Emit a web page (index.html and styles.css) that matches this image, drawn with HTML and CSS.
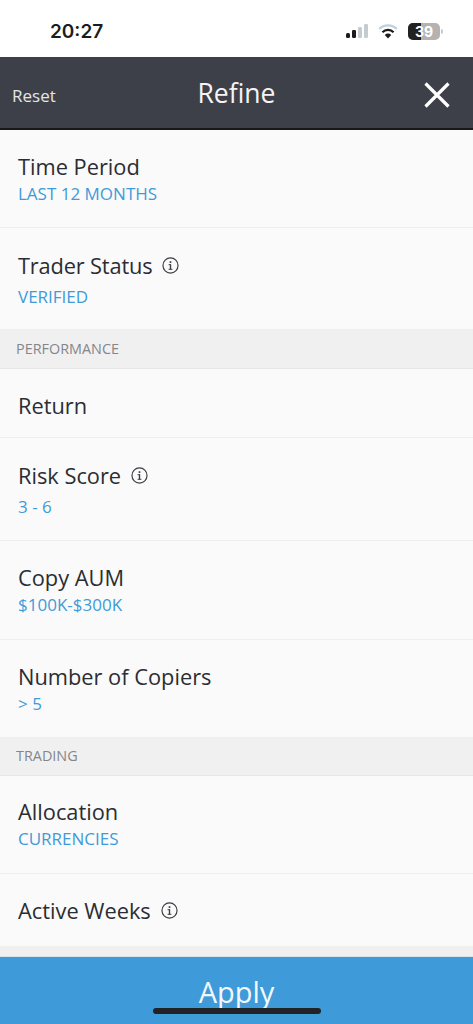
FILE: index.html
```html
<!DOCTYPE html>
<html lang="en">
<head>
<meta charset="utf-8">
<title>Refine</title>
<link rel="stylesheet" href="styles.css">
</head>
<body>
<div class="screen">
  <div class="status">
    <span class="clock">20:27</span>
    <div class="status-icons">
      <svg class="signal" width="24" height="16" viewBox="0 0 24 16"><rect x="0" y="10" width="4" height="5" rx="1.5" fill="#1c1c1e"/><rect x="6" y="7" width="4" height="8" rx="1.2" fill="#1c1c1e"/><rect x="12" y="4" width="4" height="11" rx="1.2" fill="#c4ccd2"/><rect x="18" y="1" width="4" height="14" rx="1.2" fill="#c4ccd2"/></svg>
      <svg class="wifi" width="20" height="15" viewBox="0 0 20 15"><path d="M1.2 5 A12.4 12.4 0 0 1 18.8 5" fill="none" stroke="#bfd0dc" stroke-width="2.3"/><path d="M4.4 8.2 A8 8 0 0 1 15.6 8.2" fill="none" stroke="#1c1c1e" stroke-width="2.3"/><path d="M10 14.5 L6.8 10.9 A4.6 4.6 0 0 1 13.2 10.9 Z" fill="#1c1c1e"/></svg>
      <div class="battery"><span class="battery-fill"></span><span class="battery-num">39</span><span class="battery-cap"></span></div>
    </div>
  </div>
  <header class="topbar">
    <span class="reset">Reset</span>
    <span class="title">Refine</span>
    <svg class="close" width="26" height="26" viewBox="0 0 26 26"><path d="M1.5 1.5 L24.5 24.5 M24.5 1.5 L1.5 24.5" stroke="#fff" stroke-width="3.2" fill="none"/></svg>
  </header>
  <main class="list">
    <div class="row h98"><div class="label">Time Period</div><div class="value">LAST 12 MONTHS</div></div>
    <div class="row h102 trader"><div class="label tight">Trader Status <svg class="info" viewBox="0 0 16 16"><use href="#i"/></svg></div><div class="value">VERIFIED</div></div>
    <div class="section">PERFORMANCE</div>
    <div class="row h69 solo"><div class="label">Return</div></div>
    <div class="row h103 spaced"><div class="label">Risk Score <svg class="info" viewBox="0 0 16 16"><use href="#i"/></svg></div><div class="value">3 - 6</div></div>
    <div class="row h99 up"><div class="label">Copy AUM</div><div class="value">$100K-$300K</div></div>
    <div class="row h97 last"><div class="label">Number of Copiers</div><div class="value">&gt; 5</div></div>
    <div class="section">TRADING</div>
    <div class="row h98 up"><div class="label">Allocation</div><div class="value">CURRENCIES</div></div>
    <div class="row h72 last"><div class="label">Active Weeks <svg class="info" viewBox="0 0 16 16"><use href="#i"/></svg></div></div>
  </main>
  <div class="gap"></div>
  <footer class="apply"><span>Apply</span><div class="home"></div></footer>
</div>
<svg class="defs" width="0" height="0"><defs><g id="i"><circle cx="8" cy="8" r="7.1" fill="none" stroke="#3a3c42" stroke-width="1.1"/><rect x="7.35" y="6.8" width="1.3" height="5" fill="#3a3c42"/><rect x="6.2" y="6.8" width="2" height="0.9" fill="#3a3c42"/><rect x="6.2" y="11.1" width="3.6" height="0.9" fill="#3a3c42"/><rect x="7.2" y="4" width="1.6" height="1.6" fill="#3a3c42"/></g></defs></svg>
</body>
</html>
```
FILE: styles.css
```css
* { box-sizing: border-box; }
html, body { margin: 0; padding: 0; }
body { font-family: "Open Sans", sans-serif; background: #fafafa; }
.screen { width: 473px; height: 1024px; overflow: hidden; display: flex; flex-direction: column; }
.defs { display: block; height: 0; }
.status { height: 57px; flex: none; background: #fff; display: flex; align-items: center; justify-content: space-between; padding: 6px 33px 1px 50px; }
.clock { font-family: Inter, sans-serif; font-weight: 600; font-size: 19px; color: #1c1c1e; }
.status-icons { display: flex; align-items: center; gap: 9px; }
.signal { margin-right: -1px; }
.wifi { margin-right: 1px; }
.battery { position: relative; width: 32px; height: 17px; border-radius: 5px; background: #b3b3b3; }
.battery-fill { position: absolute; left: 0; top: 0; width: 13px; height: 17px; background: #222224; border-radius: 5px 0 0 5px; }
.battery-num { position: absolute; left: 0; right: 0; top: 0; text-align: center; font-family: Inter, sans-serif; font-weight: 700; font-size: 14px; line-height: 17px; color: #fff; }
.battery-cap { position: absolute; right: -3px; top: 6px; width: 2px; height: 5px; background: #c8c8c8; border-radius: 0 2px 2px 0; }
.topbar { height: 73px; flex: none; background: #3e4049; border-bottom: 2px solid #17181c; display: flex; align-items: center; justify-content: space-between; padding: 4px 23px 0 12px; position: relative; }
.reset { font-size: 17px; color: #e4e5e7; margin-top: 2px; }
.title { position: absolute; left: 0; right: 0; text-align: center; font-size: 26.5px; color: #f4f4f5; top: 18px; line-height: 36px; }
.close { display: block; }
.list { flex: none; }
.row { border-bottom: 1px solid #efefef; padding-left: 18px; display: flex; flex-direction: column; justify-content: center; background: #fafafa; }
.row.last { border-bottom: 0; }
.h98 { height: 98px; }
.h102 { height: 102px; }
.h69 { height: 69px; }
.h103 { height: 103px; }
.h99 { height: 99px; }
.h97 { height: 97px; }
.h72 { height: 72px; }
.up { padding-bottom: 2px; }
.solo { padding-top: 4px; }
.trader { padding-top: 2px; }
.trader .value { margin-top: 7px; }
.spaced .value { margin-top: 7px; }
.label { font-size: 21.8px; line-height: 27px; color: #2b2d33; display: flex; align-items: center; gap: 10px; }
.tight { letter-spacing: -0.16px; }
.value { font-size: 17px; line-height: 21px; color: #3f9ad9; margin-top: 3px; }
.info { width: 17px; height: 17px; display: block; }
.section { height: 39px; background: #f0f0f0; border-bottom: 1px solid #e6e8e8; padding: 0 16px; font-size: 14.4px; line-height: 37px; color: #84868a; }
.gap { height: 10px; flex: none; background: #f0f0f0; }
.apply { flex: 1; background: #3f9ad9; position: relative; text-align: center; border-top: 1px solid #dbe3ea; }
.apply span { display: block; font-size: 29px; line-height: 38px; margin-top: 16px; color: #f2f8fc; }
.home { position: absolute; left: 153px; top: 51px; width: 168px; height: 6px; border-radius: 3px; background: #202226; }
```
